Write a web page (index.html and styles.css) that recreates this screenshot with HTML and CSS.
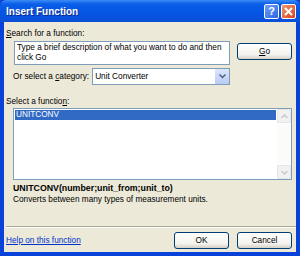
FILE: index.html
```
<!DOCTYPE html>
<html lang="en">
<head>
    <meta charset="UTF-8">
    <title>Insert Function</title>
    <link rel="stylesheet" href="styles.css">
</head>
<body>
    <div class="window">
        <div class="titlebar">
            <span class="title">Insert Function</span>
            <div class="caption-btns">
                <span class="cap-btn help">?</span>
                <span class="cap-btn close">
                    <svg width="9" height="9" viewBox="0 0 9 9"><path d="M1 1 L8 8 M8 1 L1 8" stroke="#fff" stroke-width="2"/></svg>
                </span>
            </div>
        </div>
        <div class="client">
            <div class="label"><u>S</u>earch for a function:</div>
            <div class="search-row">
                <div class="textbox">Type a brief description of what you want to do and then click Go</div>
                <button class="btn go"><u>G</u>o</button>
            </div>
            <div class="category-row">
                <span>Or select a <u>c</u>ategory:</span>
                <div class="select">
                    <span>Unit Converter</span>
                    <span class="drop">
                        <svg width="7" height="5" viewBox="0 0 7 5"><path d="M0.5 0.5 L3.5 3.5 L6.5 0.5" fill="none" stroke="#4d6185" stroke-width="1.5"/></svg>
                    </span>
                </div>
            </div>
            <div class="label fn-label">Select a functio<u>n</u>:</div>
            <div class="listbox">
                <div class="items">
                    <div class="item selected">UNITCONV</div>
                </div>
                <div class="scrollbar">
                    <span class="arrow">
                        <svg width="7" height="5" viewBox="0 0 7 5"><path d="M0.5 4 L3.5 1 L6.5 4" fill="none" stroke="#c3c9d6" stroke-width="1.5"/></svg>
                    </span>
                    <span class="arrow">
                        <svg width="7" height="5" viewBox="0 0 7 5"><path d="M0.5 1 L3.5 4 L6.5 1" fill="none" stroke="#c3c9d6" stroke-width="1.5"/></svg>
                    </span>
                </div>
            </div>
            <div class="syntax">UNITCONV(number;unit_from;unit_to)</div>
            <div class="desc">Converts between many types of measurement units.</div>
            <div class="separator"></div>
            <div class="footer">
                <a class="help-link" href="#">Help on this function</a>
                <div class="footer-btns">
                    <button class="btn">OK</button>
                    <button class="btn">Cancel</button>
                </div>
            </div>
        </div>
    </div>
</body>
</html>
```

FILE: styles.css
```
body {
    margin: 0;
    font-family: "Liberation Sans", Arial, sans-serif;
    font-size: 8.25px;
    color: #000;
}
.window {
    width: 300px;
    height: 256px;
    box-sizing: border-box;
    background: #0842d8;
    padding: 0 4px 4px 4px;
    display: flex;
    flex-direction: column;
}
.titlebar {
    height: 22px;
    margin: 0 -4px;
    padding: 0 4px 0 6px;
    display: flex;
    align-items: center;
    justify-content: space-between;
    background: linear-gradient(#3b8cf5 0%, #0a5ee8 18%, #0554e3 60%, #0a4fd6 100%);
    border-radius: 6px 6px 0 0;
}
.title {
    color: #fff;
    font-weight: bold;
    font-size: 10px;
    text-shadow: 1px 1px #0a2a8a;
}
.caption-btns {
    display: flex;
    gap: 2px;
}
.cap-btn {
    width: 15px;
    height: 15px;
    box-sizing: border-box;
    border: 1px solid #fff;
    border-radius: 2px;
    display: flex;
    align-items: center;
    justify-content: center;
}
.help {
    background: linear-gradient(135deg, #6fa0f8, #2c64e4);
    color: #fff;
    font-weight: bold;
    font-size: 11px;
}
.close {
    background: linear-gradient(135deg, #f0956f, #d9441c);
}
.client {
    flex: 1;
    background: #ece9d8;
    padding: 6px 4px 0 2px;
    display: flex;
    flex-direction: column;
}
.label {
    height: 11px;
    line-height: 11px;
}
.search-row {
    display: flex;
    justify-content: space-between;
    margin-top: 2px;
    padding-left: 8px;
}
.textbox {
    width: 216px;
    height: 24px;
    box-sizing: border-box;
    background: #fff;
    border: 1px solid #7f9db9;
    padding: 1px 2px;
    line-height: 10px;
}
.btn {
    font-family: "Liberation Sans", Arial, sans-serif;
    font-size: 8.25px;
    width: 55px;
    height: 17px;
    padding: 0;
    background: linear-gradient(#ffffff, #f4f3ee 70%, #d6d0c5);
    border: 1px solid #003c74;
    border-radius: 3px;
}
.go {
    margin-top: 2px;
}
.category-row {
    display: flex;
    align-items: center;
    margin-top: 3px;
    padding-left: 7px;
    gap: 3px;
}
.select {
    width: 138px;
    height: 17px;
    box-sizing: border-box;
    background: #fff;
    border: 1px solid #7f9db9;
    display: flex;
    align-items: center;
    justify-content: space-between;
    padding-left: 2px;
}
.drop {
    width: 14px;
    height: 15px;
    background: linear-gradient(#dce6fc, #b9cbf5);
    display: flex;
    align-items: center;
    justify-content: center;
}
.fn-label {
    margin-top: 11px;
}
.listbox {
    margin: 1px 0 0 7px;
    height: 72px;
    box-sizing: border-box;
    background: #fff;
    border: 1px solid #7f9db9;
    display: flex;
}
.items {
    flex: 1;
    padding: 1px;
}
.item {
    height: 10px;
    line-height: 10px;
    padding-left: 1px;
}
.selected {
    background: #316ac5;
    color: #fff;
}
.scrollbar {
    width: 14px;
    display: flex;
    flex-direction: column;
    justify-content: space-between;
    background: #fbfbf9;
}
.arrow {
    height: 14px;
    background: #f2f3f1;
    border: 1px solid #e4e6e8;
    border-radius: 2px;
    box-sizing: border-box;
    display: flex;
    align-items: center;
    justify-content: center;
}
.syntax {
    font-weight: bold;
    font-size: 8.8px;
    margin: 2px 0 0 7px;
    line-height: 12px;
}
.desc {
    margin-left: 7px;
    line-height: 12px;
}
.separator {
    margin-top: auto;
    margin-right: -4px;
    border-top: 1px solid #aca899;
    border-bottom: 1px solid #fff;
}
.footer {
    height: 24px;
    display: flex;
    align-items: center;
    justify-content: space-between;
}
.help-link {
    color: #0033cc;
}
.footer-btns {
    display: flex;
    gap: 8px;
}
```
